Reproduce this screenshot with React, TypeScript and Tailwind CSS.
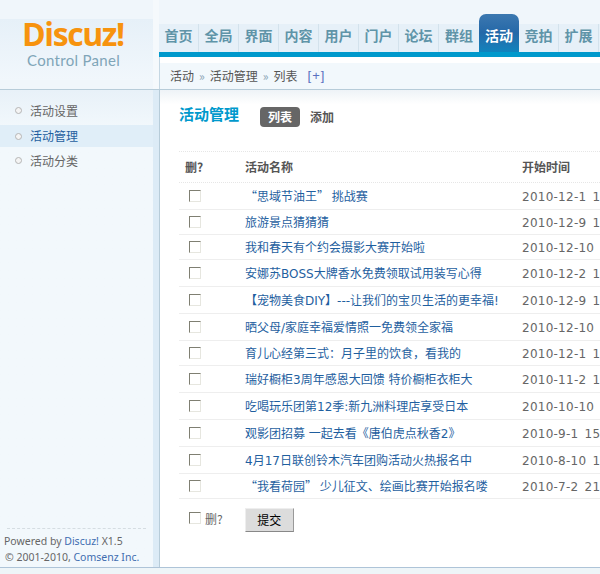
const cjk = "font-['Noto_Sans_CJK_SC','Liberation_Sans',sans-serif]";
const mixed = "pt-px font-['DejaVu_Sans','Noto_Sans_CJK_SC',sans-serif]";

const navItems = ["首页", "全局", "界面", "内容", "用户", "门户", "论坛", "群组", "活动", "竞拍", "扩展"];

const sideItems = ["活动设置", "活动管理", "活动分类"];

const rows = [
  { name: "“思域节油王” 挑战赛", time: "2010-12-1 10:00", h: "h-[27px]", quoted: true },
  { name: "旅游景点猜猜猜", time: "2010-12-9 10:00", h: "h-[25px]" },
  { name: "我和春天有个约会摄影大赛开始啦", time: "2010-12-10 10:00", h: "h-[25px]" },
  { name: "安娜苏BOSS大牌香水免费领取试用装写心得", time: "2010-12-2 10:00", h: "h-[27px]" },
  { name: "【宠物美食DIY】---让我们的宝贝生活的更幸福!", time: "2010-12-9 10:00", h: "h-[27px]" },
  { name: "晒父母/家庭幸福爱情照一免费领全家福", time: "2010-12-10 10:00", h: "h-[27px]" },
  { name: "育儿心经第三式：月子里的饮食，看我的", time: "2010-12-1 10:00", h: "h-[25px]" },
  { name: "瑞好橱柜3周年感恩大回馈 特价橱柜衣柜大", time: "2010-11-2 10:00", h: "h-[27px]" },
  { name: "吃喝玩乐团第12季:新九洲料理店享受日本", time: "2010-10-10 10:00", h: "h-[27px]" },
  { name: "观影团招募 一起去看《唐伯虎点秋香2》", time: "2010-9-1 15:00", h: "h-[27px]" },
  { name: "4月17日联创铃木汽车团购活动火热报名中", time: "2010-8-10 10:00", h: "h-[27px]" },
  { name: "“我看荷园” 少儿征文、绘画比赛开始报名喽", time: "2010-7-2 21:00", h: "h-[25px]", quoted: true },
];

function Check() {
  return (
    <input
      type="checkbox"
      className="block h-[12px] w-[12px] appearance-none border border-t-[#7f7f72] border-l-[#7f7f72] border-r-[#e6e6df] border-b-[#e6e6df] bg-white"
    />
  );
}

export default function App() {
  return (
    <div className={`flex h-[574px] w-[600px] flex-col overflow-hidden bg-[#eef5f8] ${cjk}`}>
      {/* Header */}
      <div className="flex h-[90px] flex-none border-b border-[#b7ccd9] bg-[#f0f6fb]">
        <div className="w-[153px] flex-none pt-[24px]">
          <div className="h-[61px] bg-gradient-to-b from-[#e6f0f8] to-[#f1f7fc] pl-[22px]">
            <div className="mt-[-5px] font-['Open_Sans',sans-serif] text-[32px] leading-[30px] font-bold tracking-[-1.4px] text-[#f7930e]">
              Discuz!
            </div>
            <div className="mt-[3px] ml-[5px] font-['Lato',sans-serif] text-[15px] leading-[16px] tracking-[0.3px] text-[#7fa5b8]">
              Control Panel
            </div>
          </div>
        </div>
        <div className="w-[6px] flex-none bg-[#f5f9fc]" />
        <div className="flex min-w-0 flex-1 flex-col">
          <div className="flex h-[52px] flex-none items-end">
            <div className="flex h-[28px] w-full items-stretch bg-[#e6f0f8]">
              {navItems.map((item, i) => (
                <div
                  key={item}
                  className={
                    item === "活动"
                      ? "mt-[-10px] flex w-[40px] flex-none items-center justify-center rounded-t-[7px] bg-gradient-to-b from-[#3c78b0] via-[#2468a8] to-[#0f84bd] pt-[10px] pb-[6px] text-[14px] font-bold text-white"
                      : `flex w-[40px] flex-none items-center justify-center pb-[6px] text-[14px] font-bold text-[#5f94a8] ${
                          i === 7 || i === 8 ? "" : "border-r border-[#d3e2ec]"
                        }`
                  }
                >
                  {item}
                </div>
              ))}
            </div>
          </div>
          <div className="h-[5px] flex-none bg-[#0099cc]" />
          <div className="flex-1 border-l border-[#c5d7e3]">
            <div className="h-[6px] bg-white" />
            <div className="flex h-[26px] items-center gap-[5px] bg-[#f2f8fc] pl-[10px] text-[12px] text-[#555555]">
              <span>活动</span>
              <span className="text-[#8aa4b4]">»</span>
              <span>活动管理</span>
              <span className="text-[#8aa4b4]">»</span>
              <span>列表</span>
              <span className="ml-[5px] font-['Liberation_Sans',sans-serif] text-[13px] tracking-[1px] text-[#5a70c0]">[+]</span>
            </div>
          </div>
        </div>
      </div>

      {/* Body */}
      <div className="flex h-[478px] flex-none border-b border-[#aec4d8]">
        <div className="flex w-[153px] flex-none flex-col bg-gradient-to-b from-[#e8f1f8] from-0% to-[#f2f8fc] to-[8%] pt-[8px]">
          {sideItems.map((item) => (
            <div
              key={item}
              className={`flex items-center pl-[15px] text-[12px] ${
                item === "活动管理" ? "mt-[2px] mb-px h-[22px] bg-[#e0eef8] text-[#1f5f9f]" : "h-[25px] text-[#666666]"
              }`}
            >
              <span className="mr-[8px] h-[7px] w-[7px] rounded-full border border-[#b5b5b5] bg-[#f4f4f4]" />
              {item}
            </div>
          ))}
          <div className="mt-auto pb-[2px] font-['Noto_Sans',sans-serif] text-[10.5px] leading-[16px] text-[#666666]">
            <div className="mx-[7px] mb-[4px] border-t border-dashed border-[#d5dde2]" />
            <div className="pl-[4px] whitespace-nowrap">
              Powered by <span className="text-[#3f6db0]">Discuz!</span> X1.5
            </div>
            <div className="pl-[5px] whitespace-nowrap">
              © 2001-2010, <span className="text-[#3f6db0]">Comsenz Inc.</span>
            </div>
          </div>
        </div>
        <div className="box-content w-[6px] flex-none border-r border-[#b7ccd9] bg-[#dcebf6]" />
        <div className="min-w-0 flex-1 overflow-hidden bg-gradient-to-b from-[#eef3f7] from-0% to-white to-[3%] pl-[19px]">
          <div className="flex h-[37px] items-end">
            <h1 className="mb-[3px] w-[81px] text-[15px] leading-[20px] font-bold text-[#0099cc]">活动管理</h1>
            <span className="flex h-[20px] w-[40px] items-center justify-center rounded-[4px] bg-[#666666] text-[12px] font-bold text-white">
              列表
            </span>
            <span className="ml-[10px] flex h-[20px] items-center text-[12px] font-bold text-[#555555]">添加</span>
          </div>
          <div className="mt-[24px] w-[421px]">
            <div className="flex h-[32px] items-center border-y border-dotted border-[#e6e6e6] pl-[6px] text-[12px] font-bold text-[#555555]">
              <div className="w-[60px] flex-none">删?</div>
              <div className="w-[277px] flex-none">活动名称</div>
              <div className="flex-none whitespace-nowrap">开始时间</div>
            </div>
            {rows.map((row) => (
              <div key={row.name} className={`flex ${row.h} items-center border-b border-[#eeeeee] pl-[10px]`}>
                <div className="w-[56px] flex-none">
                  <Check />
                </div>
                <div
                  className={`w-[277px] flex-none overflow-hidden text-[12px] whitespace-nowrap text-[#1f5f9f] ${
                    row.quoted ? "" : mixed
                  }`}
                >
                  {row.name}
                </div>
                <div className="flex-none pt-px font-['DejaVu_Sans',sans-serif] text-[12px] tracking-[0.25px] [word-spacing:2px] whitespace-nowrap text-[#666666]">
                  {row.time}
                </div>
              </div>
            ))}
            <div className="flex items-start pt-[9px] pl-[10px]">
              <div className="mt-[4px]">
                <Check />
              </div>
              <span className="mt-[4px] ml-[4px] text-[12px] leading-[14px] text-[#666666]">删?</span>
              <button className="ml-[22px] h-[24px] w-[49px] border border-t-[#eeeeee] border-l-[#eeeeee] border-r-[#999999] border-b-[#888888] bg-[#dcdcdc] text-[12px] text-black">
                提交
              </button>
            </div>
          </div>
        </div>
      </div>
    </div>
  );
}
